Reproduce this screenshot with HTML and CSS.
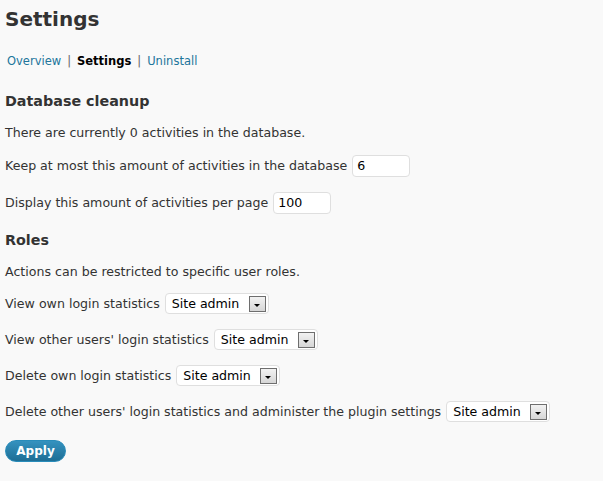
FILE: index.html
```html
<!DOCTYPE html>
<html>
<head>
<meta charset="utf-8">
<link rel="stylesheet" href="styles.css">
</head>
<body>
<div class="wrap">
  <h2 class="title">Settings</h2>
  <nav class="subnav">
    <a href="#">Overview</a><span class="sep">|</span><b class="current">Settings</b><span class="sep">|</span><a href="#">Uninstall</a>
  </nav>

  <h3 class="section">Database cleanup</h3>
  <p class="line">There are currently 0 activities in the database.</p>
  <div class="row row-keep"><span>Keep at most this amount of activities in the database</span><span class="input">6</span></div>
  <div class="row row-display"><span>Display this amount of activities per page</span><span class="input">100</span></div>

  <h3 class="section roles">Roles</h3>
  <p class="line">Actions can be restricted to specific user roles.</p>
  <div class="row srow first"><span>View own login statistics</span><span class="select"><span class="val">Site admin</span><span class="arrow"></span></span></div>
  <div class="row srow"><span>View other users' login statistics</span><span class="select"><span class="val">Site admin</span><span class="arrow"></span></span></div>
  <div class="row srow"><span>Delete own login statistics</span><span class="select"><span class="val">Site admin</span><span class="arrow"></span></span></div>
  <div class="row srow"><span>Delete other users' login statistics and administer the plugin settings</span><span class="select"><span class="val">Site admin</span><span class="arrow"></span></span></div>

  <button class="apply">Apply</button>
</div>
</body>
</html>
```
FILE: styles.css
```css
html, body { margin: 0; padding: 0; background: #f9f9f9; }
body { font-family: "DejaVu Sans", Verdana, sans-serif; color: #333; font-size: 12.6px; }
.wrap { padding: 0 5px; }
.title { margin: 0; padding-top: 6px; font-size: 20px; line-height: 26px; font-weight: bold; color: #333; }
.subnav { margin-top: 22px; font-size: 11.5px; line-height: 14px; }
.subnav a { color: #21759b; text-decoration: none; }
.subnav a:first-child { margin-left: 2px; }
.subnav .sep { color: #666; margin: 0 6px; }
.subnav .current { color: #000; }
.section { margin: 24px 0 0; font-size: 14.3px; line-height: 18px; font-weight: bold; color: #333; }
.line { margin: 15px 0 0; line-height: 16px; }
.row { display: flex; align-items: center; gap: 5px; line-height: 16px; }
.row-keep { margin-top: 14px; }
.row-display { margin-top: 15px; }
.input { display: inline-block; width: 48px; height: 20px; line-height: 20px; padding: 0 4px; background: #fff; border: 1px solid #dfdfdf; border-radius: 4px; color: #000; }
.roles { margin-top: 17px; }
.srow { margin-top: 15px; }
.srow.first { margin-top: 13px; }
.select { display: inline-flex; align-items: center; justify-content: space-between; width: 94px; height: 19px; padding: 0 2px 0 6px; background: #fff; border: 1px solid #dfdfdf; border-radius: 4px; color: #000; }
.arrow { width: 15px; height: 14px; border: 1px solid #6e6e6e; background: linear-gradient(#f2f2f2, #d6d6d6); position: relative; }
.arrow::after { content: ""; position: absolute; left: 4px; top: 7px; border-left: 3.5px solid transparent; border-right: 3.5px solid transparent; border-top: 3.5px solid #000; }
.apply { display: block; margin-top: 18px; width: 61px; height: 22px; border: 1px solid #298cba; border-radius: 11px; background: linear-gradient(#3592bf, #1e6e95); color: #fff; font-family: "DejaVu Sans", Verdana, sans-serif; font-weight: bold; font-size: 12px; padding: 0; }
```
